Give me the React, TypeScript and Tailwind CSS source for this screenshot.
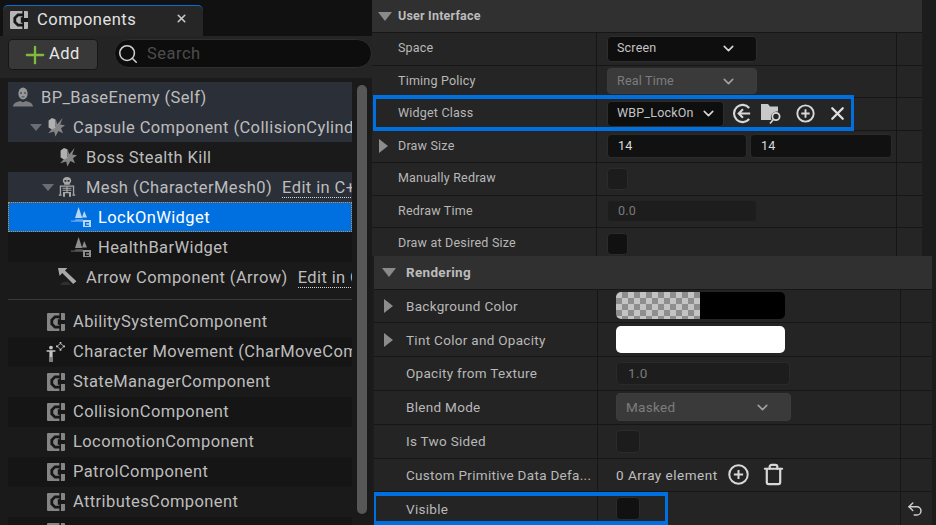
import type { ReactNode } from 'react';
import { ChevronDown, Plus, Search, Trash, Undo2, X } from 'lucide-react';

type TreeRow = {
  label: string;
  indent: number;
  gap: number;
  icon: 'class' | 'self' | 'capsule' | 'mesh' | 'widget' | 'arrow' | 'move';
  tone?: 'lit' | 'selected' | 'odd';
  caret?: boolean;
  edit?: string;
};

const upperTree: TreeRow[] = [
  { label: 'BP_BaseEnemy (Self)', indent: 5, gap: 8, icon: 'self', tone: 'lit' },
  { label: 'Capsule Component (CollisionCylinder)', indent: 22, gap: 7, icon: 'capsule', tone: 'lit', caret: true },
  { label: 'Boss Stealth Kill', indent: 50, gap: 8, icon: 'capsule' },
  { label: 'Mesh (CharacterMesh0)', indent: 34, gap: 10, icon: 'mesh', tone: 'lit', caret: true, edit: 'Edit in C++' },
  { label: 'LockOnWidget', indent: 63, gap: 5, icon: 'widget', tone: 'selected' },
  { label: 'HealthBarWidget', indent: 63, gap: 5, icon: 'widget', tone: 'odd' },
  { label: 'Arrow Component (Arrow)', indent: 50, gap: 8, icon: 'arrow', edit: 'Edit in C++' },
];

const lowerTree: TreeRow[] = [
  { label: 'AbilitySystemComponent', indent: 39, gap: 8, icon: 'class' },
  { label: 'Character Movement (CharMoveComp)', indent: 38, gap: 7, icon: 'move', tone: 'odd' },
  { label: 'StateManagerComponent', indent: 39, gap: 8, icon: 'class' },
  { label: 'CollisionComponent', indent: 39, gap: 8, icon: 'class', tone: 'odd' },
  { label: 'LocomotionComponent', indent: 39, gap: 8, icon: 'class' },
  { label: 'PatrolComponent', indent: 39, gap: 8, icon: 'class', tone: 'odd' },
  { label: 'AttributesComponent', indent: 39, gap: 8, icon: 'class' },
  { label: 'MotionComponent', indent: 39, gap: 8, icon: 'class', tone: 'odd' },
];

function ClassIcon({ className = 'text-[#858585]' }: { className?: string }) {
  return (
    <svg viewBox="0 0 18 18" className={`h-[18px] w-[18px] shrink-0 ${className}`}>
      <rect width="18" height="18" rx="1" fill="currentColor" />
      <path fill="none" stroke="#171717" strokeWidth="2.8" d="M13.4 3.8H8L4.8 7v4L8 14.2h5.4" />
      <path fill="#171717" d="M12.4 0h1.6v7h4v4h-4v7h-1.6v-6.2h-1.6V6.2h1.6z" />
    </svg>
  );
}

function TreeIcon({ name, selected }: { name: TreeRow['icon']; selected?: boolean }) {
  if (name === 'class') return <ClassIcon />;
  if (name === 'self') {
    return (
      <svg viewBox="0 0 20 20" className="h-5 w-5 shrink-0 text-[#979797]">
        <ellipse cx="10" cy="6.5" rx="4.6" ry="6" fill="currentColor" />
        <path fill="#2c3038" d="M7 5.5h2v1H7zM11 5.5h2v1h-2zM8.5 9.6h3v.7h-3z" />
        <path fill="currentColor" opacity="0.75" d="M0 19.5c0-3.5 4-4.6 7-5.6l3 1.4 3-1.4c3 1 7 2.1 7 5.6z" />
      </svg>
    );
  }
  if (name === 'capsule') {
    return (
      <svg viewBox="0 0 20 20" className="h-5 w-5 shrink-0 text-[#b0b0b0]">
        <path fill="#858585" d="M10 3l1.2 4.2L16.6 1l-2.4 6.6 4.8.6-4 3 2 5-4.6-2.2-3 5.4-1.2-5-6 1.8 3.8-4.2L10 9.8z" />
        <path fill="currentColor" d="M2.6 3.6 6 1l3.6 1.4v8.4L6 12.6l-3.4-2z" />
      </svg>
    );
  }
  if (name === 'mesh') {
    return (
      <svg viewBox="0 0 18 20" className="h-5 w-[18px] shrink-0 text-[#a8a8a8]">
        <path fill="currentColor" d="M9 0c2.6 0 4.2 1.5 4.2 3.6 0 1.3-.5 2.2-1.4 2.8v1.3H6.2V6.4c-.9-.6-1.4-1.5-1.4-2.8C4.8 1.5 6.4 0 9 0z" />
        <path fill="#2c3038" d="M6.5 3h1.9v1.8H6.5zM9.6 3h1.9v1.8H9.6z" />
        <path fill="currentColor" d="M2.4 8.6h13.2v1.1H2.4zM4.6 10.8h8.8v1H4.6zM4.6 12.8h8.8v1H4.6zM1.8 8.6h1.3v8.4H1.8zM14.9 8.6h1.3v8.4h-1.3zM8.4 8.6h1.2v6.6H8.4zM5 15h8v1.2H5zM0.8 17.2h2.8v1.6H0.8zM14.4 17.2h2.8v1.6h-2.8zM5 16.2h2v3.6H5zM11 16.2h2v3.6h-2z" />
      </svg>
    );
  }
  if (name === 'widget') {
    const main = selected ? 'text-[#b9d6f5]' : 'text-[#8e8e8e]';
    return (
      <svg viewBox="0 0 22 20" className={`h-5 w-[22px] shrink-0 ${main}`}>
        <path fill="currentColor" d="M7.6 0l3.6 11H4zM13.2 4l2.8 6.6h-5z" />
        <path fill="currentColor" opacity="0.55" d="M0 13.4h3.6l1-1.2h7l.9 1.2v1.4H0z" />
        <rect x="12" y="13" width="8" height="7" fill="currentColor" />
        <path fill={selected ? '#0070e0' : '#161616'} d="M14 15h4v1.2h-2.8v1.6H18V19h-4z" />
      </svg>
    );
  }
  if (name === 'arrow') {
    return (
      <svg viewBox="0 0 20 18" className="h-[18px] w-5 shrink-0 text-[#a8a8a8]">
        <path fill="#2e2e2e" d="M2 17c1.4-2.6 4-3.6 8-3.4l3 3.4z" />
        <path fill="currentColor" d="M0 0h9.4L7 2.6l11.4 10.6-3.2 2.8L4.2 5 1.6 8z" />
      </svg>
    );
  }
  return (
    <svg viewBox="0 0 20 20" className="h-5 w-5 shrink-0 text-[#c4c4c4]">
      <circle cx="5" cy="5.6" r="1.9" fill="currentColor" />
      <path fill="currentColor" d="M0.6 8.2h8.8v1.5H6.6V20H5.4v-5H4.6v5H3.4V9.7H0.6z" />
      <path fill="currentColor" d="M13.6 0h1.8v1.8h-1.8zM13.6 7h1.8v1.8h-1.8zM10 3.5h1.8v1.8H10zM17.2 3.5H19v1.8h-1.8z" />
      <path fill="none" stroke="currentColor" strokeWidth="0.7" d="M14.5 1.8 17.2 3.5 17.2 5.3 14.5 7 11.8 5.3 11.8 3.5z" />
    </svg>
  );
}

function TreeItem({ row, upper }: { row: TreeRow; upper?: boolean }) {
  const bg =
    row.tone === 'lit'
      ? 'bg-[#2b3038]'
      : row.tone === 'odd'
        ? 'bg-[#151515]'
        : row.tone === 'selected'
          ? 'bg-[#0070e0] outline-1 outline-dotted -outline-offset-1 outline-[#e08a1e]'
          : '';
  const text = row.tone === 'selected' ? 'text-white' : 'text-[#bdbdbd]';
  return (
    <div
      className={`flex h-[30px] items-center overflow-hidden whitespace-nowrap ${bg} ${text}`}
      style={{ paddingLeft: row.indent }}
    >
      {row.caret && <span className="mr-1 h-0 w-0 shrink-0 border-x-[6px] border-t-[7px] border-x-transparent border-t-[#6a6e74]" />}
      <TreeIcon name={row.icon} selected={row.tone === 'selected'} />
      <span className={upper ? 'pt-[2px]' : ''} style={{ marginLeft: row.gap }}>
        {row.label}
      </span>
      {row.edit && (
        <span className="ml-[10px] mt-[2px] border-b border-dotted border-[#d5d5d5] leading-[19px]">{row.edit}</span>
      )}
    </div>
  );
}

function ComponentsPanel() {
  return (
    <aside className="flex h-[525px] w-[372px] shrink-0 flex-col overflow-hidden bg-[#111111] font-['Roboto',sans-serif]">
      <div className="flex h-9 shrink-0 items-end pl-[3px] pt-1">
        <div className="flex h-[31px] w-[200px] items-center rounded-t-[5px] border-t border-t-[#0a6ed1] bg-[#262626] pb-[2px] pl-[7px]">
          <ClassIcon className="text-[#b5b5b5]" />
          <span className="ml-[9px] text-[16.5px] tracking-[0.5px] text-[#e2e2e2]">Components</span>
          <X size={13} strokeWidth={3} className="-mt-[3px] ml-auto mr-[15px] text-[#c8c8c8]" />
        </div>
      </div>
      <div className="flex h-[42px] shrink-0 items-start gap-4 bg-[#242424] pl-2 pt-[3px]">
        <button className="flex h-[31px] w-[90px] items-center rounded-[4px] border border-[#161616] bg-[#383838] pl-[13px] text-[16.5px] tracking-[0.5px] text-[#e6e6e6]">
          <Plus size={28} strokeWidth={2} className="-my-2 -ml-px text-[#7fba3c]" />
          Add
        </button>
        <div className="flex h-[29px] flex-1 items-center rounded-full border border-[#2f2f2f] bg-[#0d0d0d] pl-[2px]">
          <Search size={22} strokeWidth={1.7} className="text-[#d0d0d0]" />
          <span className="ml-[8px] pt-[2px] text-[16.5px] tracking-[0.5px] text-[#4c4c4c]">Search</span>
        </div>
      </div>
      <div className="flex flex-1 gap-[5px] bg-[#1a1a1a] pl-2 pr-[5px] pt-1">
        <div className="w-[344px] shrink-0 text-[16.5px] tracking-[0.4px]">
          {upperTree.map((row) => (
            <TreeItem key={row.label} row={row} upper />
          ))}
          <div className="my-[7px] h-px bg-[#3a3a3a]" />
          {lowerTree.map((row) => (
            <TreeItem key={row.label} row={row} />
          ))}
        </div>
        <div className="mt-[3px] h-[429px] w-[10px] rounded-full bg-[#575757]" />
      </div>
    </aside>
  );
}

function Dropdown({ label, disabled, w }: { label: string; disabled?: boolean; w: string }) {
  return (
    <div
      className={`flex h-[26px] items-center justify-between rounded-[4px] border pl-[9px] pr-[19px] ${w} ${
        disabled ? 'border-[#3d3d3d] bg-[#3a3a3a] text-[#7d7d7d]' : 'border-[#2d2d2d] bg-[#0e0e0e] text-[#c4c4c4]'
      }`}
    >
      <span>{label}</span>
      <ChevronDown size={17} strokeWidth={2.2} className={disabled ? 'text-[#a0a0a0]' : 'text-[#d8d8d8]'} />
    </div>
  );
}

function Check({ dark }: { dark?: boolean }) {
  return (
    <div className={`h-[22px] w-[21px] rounded-[4px] border border-[#2b2b2b] ${dark ? 'bg-[#111111]' : 'bg-[#1c1c1c]'}`} />
  );
}

function Caret() {
  return <span className="h-0 w-0 border-y-[7px] border-l-[9px] border-y-transparent border-l-[#8c8c8c]" />;
}

function HeaderRow({ title, pad, className }: { title: string; pad: string; className: string }) {
  return (
    <div className={`flex shrink-0 items-center border-b border-[#161616] bg-[#303030] font-bold text-[#bcbcbc] ${className}`}>
      <span className="h-0 w-0 border-x-[7px] border-t-[9px] border-x-transparent border-t-[#8a8a8a]" />
      <span className={pad}>{title}</span>
    </div>
  );
}

function UiRow({ label, caret, children, blue }: { label: string; caret?: boolean; children?: ReactNode; blue?: boolean }) {
  return (
    <div className="relative flex h-[32.5px] border-b border-[#161616] bg-[#252525] text-[#b8b8b8]">
      <div className="flex w-[225px] shrink-0 items-center border-r border-[#161616] pl-[7px]">
        <span className="flex w-[19px] items-center">{caret && <Caret />}</span>
        {label}
      </div>
      <div className="flex flex-1 items-center gap-[3px] pl-[10px]">{children}</div>
      <div className="w-[26px] border-l border-[#161616]" />
      {blue && <div className="absolute -top-[3px] left-[1px] h-[36px] w-[481px] border-x-[3px] border-y-4 border-[#0070e0]" />}
    </div>
  );
}

function ClassActions() {
  return (
    <div className="ml-[5px] flex items-center text-[#d8d8d8]">
      <svg viewBox="0 0 22 22" className="h-[21px] w-[21px]" fill="none" stroke="currentColor" strokeWidth="2.2">
        <path d="M18 5.2A9 9 0 1 0 18 16.8" />
        <path d="M19 11H7M11.5 6.5 7 11l4.5 4.5" />
      </svg>
      <svg viewBox="0 0 22 22" className="ml-[8px] h-[23px] w-[22px]">
        <path fill="#c8c8c8" d="M0 1.5h7l2 2.5h8v5a6 6 0 0 0-6.4 8.6H0z" />
        <circle cx="15" cy="14" r="3.6" fill="none" stroke="#d8d8d8" strokeWidth="1.8" />
        <path d="M12.4 17 9 21" stroke="#d8d8d8" strokeWidth="1.6" />
      </svg>
      <svg viewBox="0 0 20 20" className="ml-[13px] h-[19px] w-[19px]" fill="none" stroke="currentColor" strokeWidth="2">
        <circle cx="10" cy="10" r="8.6" />
        <path d="M10 5.6v8.8M5.6 10h8.8" />
      </svg>
      <X size={21} strokeWidth={2.6} className="ml-[12px] text-[#e0e0e0]" />
    </div>
  );
}

function LowerRow({ label, caret, children, action }: { label: string; caret?: boolean; children?: ReactNode; action?: ReactNode }) {
  return (
    <div className="flex h-[33.8px] shrink-0 border-b border-[#161616] bg-[#242424] text-[#b8b8b8]">
      <div className="flex w-[224px] shrink-0 items-center overflow-hidden whitespace-nowrap border-r border-[#161616] pl-[10px]">
        <span className="flex w-[22px] shrink-0 items-center">{caret && <Caret />}</span>
        {label}
      </div>
      <div className="flex w-[302px] shrink-0 items-center pl-[18px]">{children}</div>
      <div className="flex flex-1 items-center border-l border-[#161616] pl-[5px]">{action}</div>
    </div>
  );
}

function DetailsPanel() {
  return (
    <main className="flex h-[525px] flex-1 flex-col overflow-hidden bg-[#1c1c1c] font-['Roboto',sans-serif]">
      <div className="h-[256px] shrink-0 overflow-hidden pr-[14px] text-[12.5px] tracking-[0.2px]">
        <HeaderRow title="User Interface" pad="ml-[6px]" className="h-[33px] pl-[6px]" />
        <UiRow label="Space">
          <Dropdown label="Screen" w="w-[150px]" />
        </UiRow>
        <UiRow label="Timing Policy">
          <Dropdown label="Real Time" disabled w="w-[150px]" />
        </UiRow>
        <UiRow label="Widget Class" blue>
          <Dropdown label="WBP_LockOn" w="w-[117px] !pr-[6px]" />
          <ClassActions />
        </UiRow>
        <UiRow label="Draw Size" caret>
          <div className="flex h-[24px] w-[140px] items-center rounded-[4px] border border-[#2b2b2b] bg-[#111111] pl-[10px] text-[#dcdcdc]">14</div>
          <div className="flex h-[24px] w-[142px] items-center rounded-[4px] border border-[#2b2b2b] bg-[#111111] pl-[10px] text-[#dcdcdc]">14</div>
        </UiRow>
        <UiRow label="Manually Redraw">
          <Check />
        </UiRow>
        <UiRow label="Redraw Time">
          <div className="flex h-[22px] w-[150px] items-center rounded-[4px] border border-[#242424] bg-[#1d1d1d] pl-[10px] text-[#7a7a7a]">0.0</div>
        </UiRow>
        <UiRow label="Draw at Desired Size">
          <Check dark />
        </UiRow>
      </div>
      <div className="ml-[2px] flex flex-1 flex-col overflow-hidden pr-[4px] text-[13.5px] tracking-[0.3px]">
        <HeaderRow title="Rendering" pad="ml-[10px]" className="h-[33.6px] pl-[8px]" />
        <LowerRow label="Background Color" caret>
          <div className="flex h-[27px] w-[169px] overflow-hidden rounded-[5px] bg-black">
            <div className="h-full w-[84px] bg-[repeating-conic-gradient(#8e8e8e_0%_25%,#c4c4c4_0%_50%)] bg-[length:12px_12px]" />
          </div>
        </LowerRow>
        <LowerRow label="Tint Color and Opacity" caret>
          <div className="h-[27px] w-[169px] rounded-[5px] bg-white" />
        </LowerRow>
        <LowerRow label="Opacity from Texture">
          <div className="flex h-[23px] w-[174px] items-center rounded-[4px] border border-[#2a2a2a] bg-[#1d1d1d] pl-[11px] text-[#7a7a7a]">1.0</div>
        </LowerRow>
        <LowerRow label="Blend Mode">
          <Dropdown label="Masked" disabled w="w-[175px] h-[28px]" />
        </LowerRow>
        <LowerRow label="Is Two Sided">
          <div className="h-[23px] w-[24px] rounded-[4px] border border-[#2b2b2b] bg-[#1c1c1c]" />
        </LowerRow>
        <LowerRow label="Custom Primitive Data Defa...">
          <span className="tracking-[0.5px] text-[#c0c0c0]">0 Array element</span>
          <svg viewBox="0 0 20 20" className="ml-[10px] h-[21px] w-[21px] text-[#d8d8d8]" fill="none" stroke="currentColor" strokeWidth="1.9">
            <circle cx="10" cy="10" r="8.8" />
            <path d="M10 5.6v8.8M5.6 10h8.8" />
          </svg>
          <Trash size={23} strokeWidth={2.3} className="ml-[13px] text-[#d8d8d8]" />
        </LowerRow>
        <div className="relative">
          <LowerRow label="Visible" action={<Undo2 size={18} strokeWidth={1.9} className="text-[#cfcfcf]" />}>
            <div className="h-[23px] w-[24px] rounded-[4px] border border-[#2b2b2b] bg-[#111111]" />
          </LowerRow>
          <div className="absolute -left-px top-0 h-[33px] w-[295px] border-x-[3px] border-y-4 border-[#0070e0]" />
        </div>
      </div>
    </main>
  );
}

export default function App() {
  return (
    <div className="flex h-[525px] w-[936px] overflow-hidden">
      <ComponentsPanel />
      <DetailsPanel />
    </div>
  );
}
